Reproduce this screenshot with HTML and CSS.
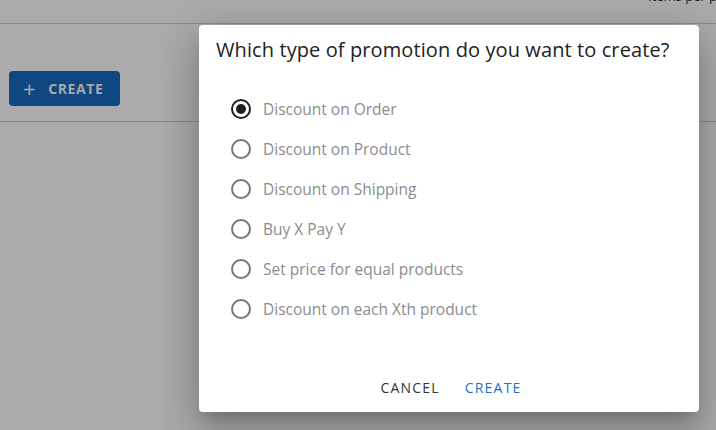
FILE: index.html
```html
<!DOCTYPE html>
<html>
<head>
<meta charset="utf-8">
<link rel="stylesheet" href="styles.css">
</head>
<body>
<div class="page">
  <div class="topbar"><span class="items">Items per page:</span></div>
  <div class="toolbar">
    <button class="create-main"><span class="plus">+</span>CREATE</button>
  </div>
  <div class="content"></div>
</div>
<div class="dialog">
  <h2 class="title">Which type of promotion do you want to create?</h2>
  <div class="options">
    <label class="opt"><span class="radio checked"></span><span class="label">Discount on Order</span></label>
    <label class="opt"><span class="radio"></span><span class="label">Discount on Product</span></label>
    <label class="opt"><span class="radio"></span><span class="label">Discount on Shipping</span></label>
    <label class="opt"><span class="radio"></span><span class="label">Buy X Pay Y</span></label>
    <label class="opt"><span class="radio"></span><span class="label">Set price for equal products</span></label>
    <label class="opt"><span class="radio"></span><span class="label">Discount on each Xth product</span></label>
  </div>
  <div class="actions">
    <button class="btn cancel">CANCEL</button>
    <button class="btn confirm">CREATE</button>
  </div>
</div>
</body>
</html>
```
FILE: styles.css
```css
html, body {
  margin: 0;
  padding: 0;
  width: 716px;
  height: 430px;
  overflow: hidden;
  background: #ababab;
  font-family: "Open Sans", "Noto Sans", sans-serif;
}
.page {
  display: flex;
  flex-direction: column;
}
.topbar {
  height: 23px;
  border-bottom: 1px solid #8a8a8a;
  position: relative;
}
.items {
  position: absolute;
  left: 648px;
  top: -13px;
  font-size: 13px;
  color: #1a1a1a;
  white-space: nowrap;
}
.toolbar {
  height: 98px;
  border-bottom: 1px solid #8a8a8a;
  padding: 47px 0 0 9px;
  box-sizing: border-box;
}
.create-main {
  width: 111px;
  height: 35px;
  background: #0f4780;
  border: none;
  border-radius: 4px;
  color: #a9a9a9;
  font-family: inherit;
  font-weight: 700;
  font-size: 14px;
  letter-spacing: 0.6px;
  display: flex;
  align-items: center;
  padding: 0 0 0 14px;
}
.plus {
  font-size: 22px;
  font-weight: 400;
  margin-right: 12px;
  line-height: 1;
  position: relative;
  top: -1px;
}
.dialog {
  position: absolute;
  left: 199px;
  top: 25px;
  width: 500px;
  height: 387px;
  background: #fff;
  border-radius: 4px;
  box-shadow: 0 11px 15px -7px rgba(0,0,0,0.2), 0 24px 38px 3px rgba(0,0,0,0.14), 0 9px 46px 8px rgba(0,0,0,0.12);
  display: flex;
  flex-direction: column;
  box-sizing: border-box;
}
.title {
  margin: 0;
  padding: 12px 17px 0;
  font-size: 20px;
  font-weight: 500;
  color: #222;
  line-height: 26px;
  letter-spacing: 0.1px;
  white-space: nowrap;
}
.options {
  display: flex;
  flex-direction: column;
  padding: 26px 0 0 32px;
}
.opt {
  display: flex;
  align-items: center;
  height: 40px;
}
.radio {
  width: 16px;
  height: 16px;
  border: 2px solid #757575;
  border-radius: 50%;
  box-sizing: content-box;
  margin-right: 12px;
  position: relative;
}
.radio.checked {
  border-color: #1e1e1e;
}
.radio.checked::after {
  content: "";
  position: absolute;
  left: 3px;
  top: 3px;
  width: 10px;
  height: 10px;
  border-radius: 50%;
  background: #1e1e1e;
}
.label {
  font-size: 15.5px;
  color: #8c8c8c;
}
.actions {
  margin-top: auto;
  display: flex;
  justify-content: center;
  gap: 9px;
  padding: 0 0 7px 4px;
}
.btn {
  background: none;
  border: none;
  font-family: inherit;
  font-size: 14px;
  font-weight: 500;
  letter-spacing: 1.2px;
  height: 36px;
  padding: 0 8px;
}
.cancel { color: #333; }
.confirm { color: #1b72c7; }
```
